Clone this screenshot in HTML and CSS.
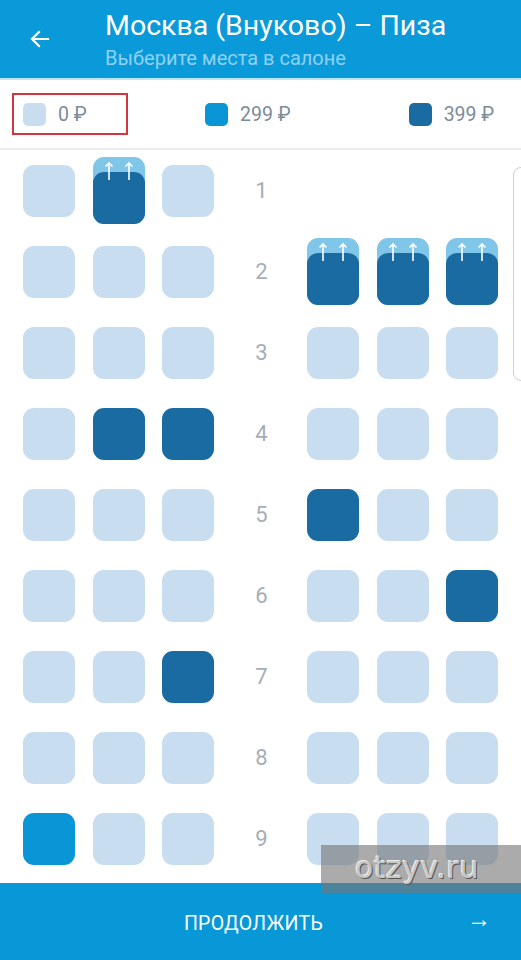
FILE: index.html
```html
<!DOCTYPE html>
<html lang="ru">
<head>
<meta charset="utf-8">
<link rel="stylesheet" href="styles.css">
</head>
<body>
<div class="app">
  <header class="topbar">
    <svg class="back" width="24" height="24" viewBox="0 0 24 24"><path d="M20 12H5M11 5l-7 7 7 7" fill="none" stroke="#fff" stroke-width="2.2" stroke-linecap="square"/></svg>
    <div class="titles">
      <div class="title">Москва (Внуково) – Пиза</div>
      <div class="subtitle">Выберите места в салоне</div>
    </div>
  </header>
  <div class="legend">
    <div class="leg leg-free"><span class="sw light"></span><span class="lt">0 ₽</span></div>
    <div class="leg leg-mid"><span class="sw mid"></span><span class="lt">299 ₽</span></div>
    <div class="leg leg-dark"><span class="sw dark"></span><span class="lt">399 ₽</span></div>
  </div>
  <main class="map">
    <div class="row">
      <div class="grp"><span class="seat light"></span><span class="seat xl"><svg class="arrows" width="34" height="20" viewBox="0 0 34 20"><path d="M6 19V2M2.5 5.5L6 2l3.5 3.5M26 19V2M22.5 5.5L26 2l3.5 3.5" fill="none" stroke="#fff" stroke-width="1.6"/></svg></span><span class="seat light"></span></div>
      <div class="num">1</div>
      <div class="grp"></div>
    </div>
    <div class="row">
      <div class="grp"><span class="seat light"></span><span class="seat light"></span><span class="seat light"></span></div>
      <div class="num">2</div>
      <div class="grp"><span class="seat xl"><svg class="arrows" width="34" height="20" viewBox="0 0 34 20"><path d="M6 19V2M2.5 5.5L6 2l3.5 3.5M26 19V2M22.5 5.5L26 2l3.5 3.5" fill="none" stroke="#fff" stroke-width="1.6"/></svg></span><span class="seat xl"><svg class="arrows" width="34" height="20" viewBox="0 0 34 20"><path d="M6 19V2M2.5 5.5L6 2l3.5 3.5M26 19V2M22.5 5.5L26 2l3.5 3.5" fill="none" stroke="#fff" stroke-width="1.6"/></svg></span><span class="seat xl"><svg class="arrows" width="34" height="20" viewBox="0 0 34 20"><path d="M6 19V2M2.5 5.5L6 2l3.5 3.5M26 19V2M22.5 5.5L26 2l3.5 3.5" fill="none" stroke="#fff" stroke-width="1.6"/></svg></span></div>
    </div>
    <div class="row">
      <div class="grp"><span class="seat light"></span><span class="seat light"></span><span class="seat light"></span></div>
      <div class="num">3</div>
      <div class="grp"><span class="seat light"></span><span class="seat light"></span><span class="seat light"></span></div>
    </div>
    <div class="row">
      <div class="grp"><span class="seat light"></span><span class="seat dark"></span><span class="seat dark"></span></div>
      <div class="num">4</div>
      <div class="grp"><span class="seat light"></span><span class="seat light"></span><span class="seat light"></span></div>
    </div>
    <div class="row">
      <div class="grp"><span class="seat light"></span><span class="seat light"></span><span class="seat light"></span></div>
      <div class="num">5</div>
      <div class="grp"><span class="seat dark"></span><span class="seat light"></span><span class="seat light"></span></div>
    </div>
    <div class="row">
      <div class="grp"><span class="seat light"></span><span class="seat light"></span><span class="seat light"></span></div>
      <div class="num">6</div>
      <div class="grp"><span class="seat light"></span><span class="seat light"></span><span class="seat dark"></span></div>
    </div>
    <div class="row">
      <div class="grp"><span class="seat light"></span><span class="seat light"></span><span class="seat dark"></span></div>
      <div class="num">7</div>
      <div class="grp"><span class="seat light"></span><span class="seat light"></span><span class="seat light"></span></div>
    </div>
    <div class="row">
      <div class="grp"><span class="seat light"></span><span class="seat light"></span><span class="seat light"></span></div>
      <div class="num">8</div>
      <div class="grp"><span class="seat light"></span><span class="seat light"></span><span class="seat light"></span></div>
    </div>
    <div class="row">
      <div class="grp"><span class="seat mid"></span><span class="seat light"></span><span class="seat light"></span></div>
      <div class="num">9</div>
      <div class="grp"><span class="seat light"></span><span class="seat light"></span><span class="seat light"></span></div>
    </div>
    <div class="panel-edge"></div>
  </main>
  <footer class="bottombar">
    <span class="cta">ПРОДОЛЖИТЬ</span>
    <span class="cta-arrow">→</span>
  </footer>
  <div class="watermark">otzyv.ru</div>
</div>
</body>
</html>
```
FILE: styles.css
```css
* { box-sizing: border-box; }
html, body { margin: 0; padding: 0; }
body {
  width: 521px;
  height: 960px;
  overflow: hidden;
  font-family: Roboto, "Noto Sans", sans-serif;
  background: #fff;
}
.app {
  position: relative;
  display: flex;
  flex-direction: column;
  height: 960px;
}
.topbar {
  height: 80px;
  background: #0b9ad9;
  border-bottom: 2px solid #b9e6f8;
  display: flex;
  align-items: flex-start;
  flex-shrink: 0;
}
.back {
  margin: 27px 0 0 28px;
}
.titles {
  margin-left: 53px;
  padding-top: 9px;
}
.title {
  color: #fff;
  font-size: 28.5px;
  line-height: 34px;
}
.subtitle {
  color: #8dd2f2;
  font-size: 20px;
  line-height: 24px;
  margin-top: 3px;
}
.legend {
  height: 70px;
  border-bottom: 2px solid #ececec;
  display: flex;
  align-items: center;
  flex-shrink: 0;
  position: relative;
}
.leg {
  display: flex;
  align-items: center;
}
.leg-free {
  margin-left: 12px;
  width: 116px;
  height: 42px;
  border: 2px solid #d3343d;
  padding-left: 9px;
}
.leg-mid { margin-left: 77px; }
.leg-dark { margin-left: 118px; }
.sw {
  width: 23px;
  height: 23px;
  border-radius: 5px;
  display: inline-block;
}
.lt {
  margin-left: 12px;
  color: #7d8b99;
  font-size: 19.5px;
}
.light { background: #c8def0; }
.mid { background: #0a96d6; }
.dark { background: #1b6ba3; }
.map {
  flex: 1;
  position: relative;
  padding-left: 23px;
  overflow: hidden;
}
.row {
  height: 81px;
  display: flex;
  align-items: center;
}
.grp {
  width: 191px;
  display: flex;
  gap: 17.5px;
  align-items: center;
}
.seat {
  width: 52px;
  height: 52px;
  border-radius: 11px;
  display: block;
  flex-shrink: 0;
}
.seat.xl {
  height: 67px;
  background: #80c6e9;
  position: relative;
}
.seat.xl::after {
  content: "";
  position: absolute;
  left: 0;
  right: 0;
  bottom: 0;
  height: 52px;
  border-radius: 11px;
  background: #1b6ba3;
}
.arrows {
  position: absolute;
  left: 10px;
  top: 4px;
  z-index: 1;
}
.num {
  width: 93px;
  text-align: center;
  color: #a5aeb8;
  font-size: 22px;
  padding-left: 2px;
}
.panel-edge {
  position: absolute;
  left: 513px;
  top: 17px;
  width: 24px;
  height: 214px;
  border: 1px solid #cfcfcf;
  border-radius: 8px;
}
.bottombar {
  height: 77px;
  background: #0898d8;
  flex-shrink: 0;
  display: flex;
  align-items: center;
  justify-content: center;
  position: relative;
  padding-right: 14px;
  padding-top: 4px;
}
.cta {
  color: #fff;
  font-size: 19.5px;
  letter-spacing: 0.3px;
}
.cta-arrow {
  position: absolute;
  right: 30px;
  top: 22px;
  color: #fff;
  font-size: 24px;
}
.watermark {
  position: absolute;
  left: 321px;
  top: 845px;
  width: 200px;
  height: 48px;
  background: rgba(120, 120, 120, 0.62);
  color: #c8c8c8;
  font-family: "DejaVu Sans", sans-serif;
  font-size: 30px;
  line-height: 46px;
  padding-left: 34px;
  letter-spacing: 0.5px;
  text-shadow: 1px 1px 0 #555, -1px -1px 0 #eee;
}
```
